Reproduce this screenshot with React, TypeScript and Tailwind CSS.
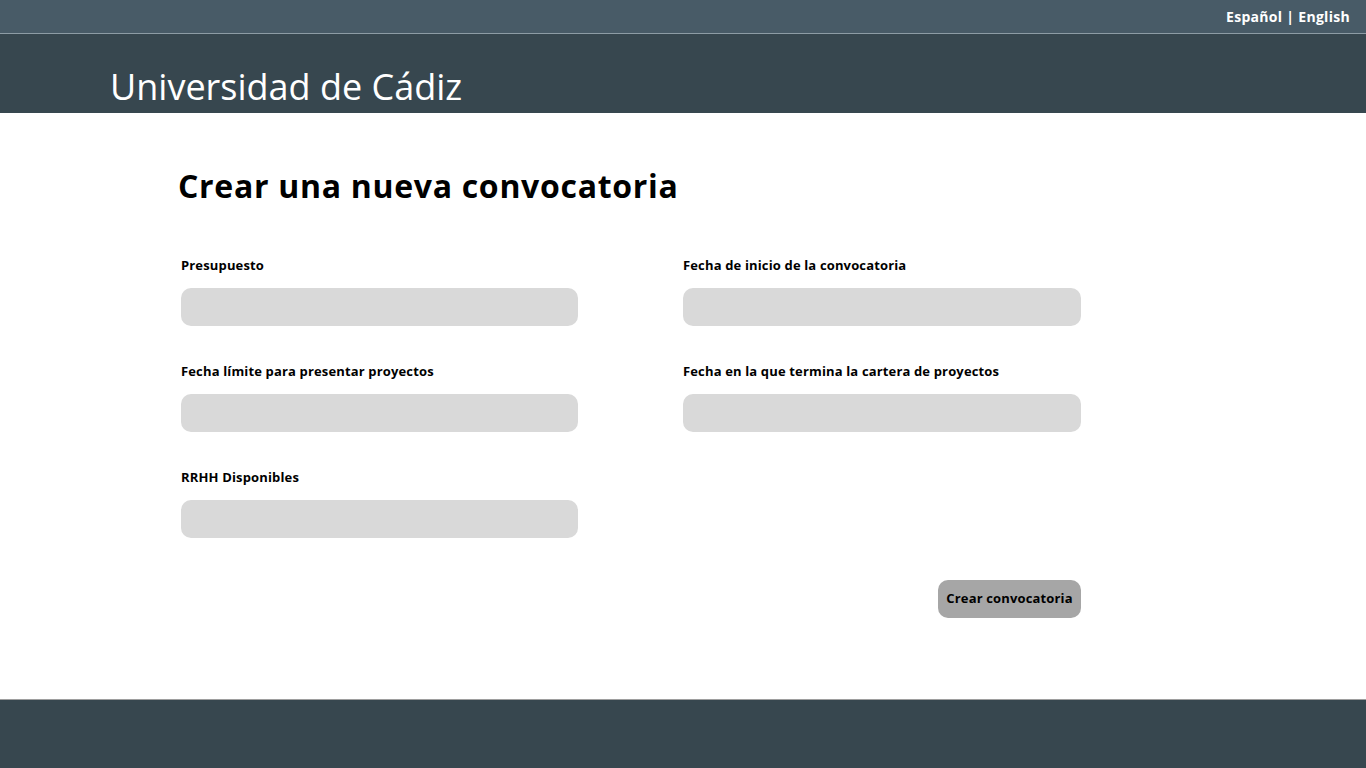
import React from 'react';

const fields = [
  { id: 'presupuesto', label: 'Presupuesto' },
  { id: 'inicio', label: 'Fecha de inicio de la convocatoria' },
  { id: 'limite', label: 'Fecha límite para presentar proyectos' },
  { id: 'fin', label: 'Fecha en la que termina la cartera de proyectos' },
  { id: 'rrhh', label: 'RRHH Disponibles' },
];

export default function App() {
  return (
    <div className="flex flex-col min-h-screen bg-white font-['Open_Sans',sans-serif]">
      {/* Top bar */}
      <div className="h-[33px] bg-[#485b67] border-b border-[#8d9ca5] flex items-center justify-end pr-4 box-content">
        <span className="text-white text-[14px] font-bold tracking-[0.3px]">Español | English</span>
      </div>

      {/* Header */}
      <header className="h-[79px] bg-[#37474f] flex items-end pl-[110px]">
        <h1 className="text-white text-[36px] leading-[49px] font-normal mb-[2px]">Universidad de Cádiz</h1>
      </header>

      {/* Content */}
      <main className="flex-1 pl-[181px] pt-[51px]">
        <h2 className="-ml-[3px] text-[32px] leading-[44px] font-bold tracking-[0.7px] text-black">
          Crear una nueva convocatoria
        </h2>

        <form className="mt-[48px] w-[900px]" onSubmit={(e) => e.preventDefault()}>
          <div className="grid grid-cols-[397px_398px] gap-x-[105px] gap-y-[36px]">
            {fields.map((f) => (
              <div key={f.id} className="flex flex-col">
                <label htmlFor={f.id} className="text-[13px] leading-[18px] font-bold tracking-[0.15px] text-black">
                  {f.label}
                </label>
                <input
                  id={f.id}
                  className="mt-[14px] h-[38px] rounded-[10px] bg-[#d9d9d9] outline-none px-3"
                />
              </div>
            ))}
          </div>

          <div className="flex justify-end mt-[42px]">
            <button
              type="submit"
              className="h-[38px] w-[143px] rounded-[10px] bg-[#a6a6a6] text-[13px] font-bold tracking-[0.15px] text-black"
            >
              Crear convocatoria
            </button>
          </div>
        </form>
      </main>

      {/* Footer */}
      <footer className="h-[69px] bg-[#37474f] border-t border-[#9e9e9e]" />
    </div>
  );
}
